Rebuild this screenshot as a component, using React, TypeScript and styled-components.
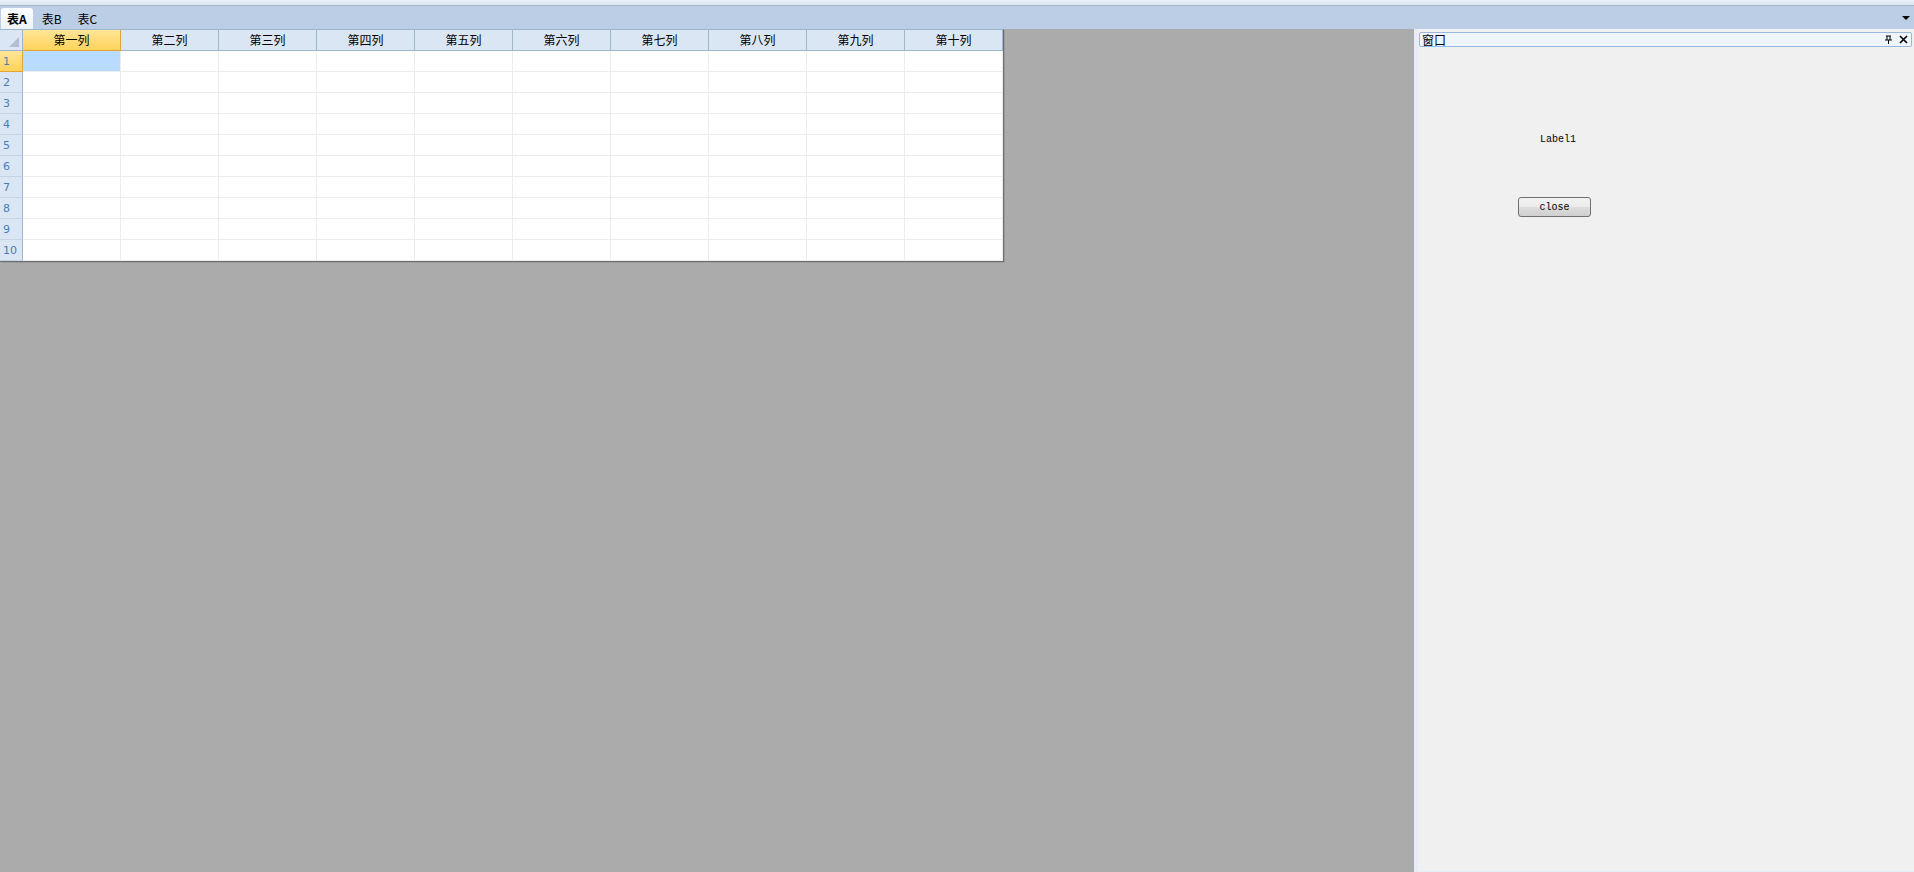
import React from 'react';
import styled, { createGlobalStyle } from 'styled-components';

const GlobalStyle = createGlobalStyle`
  *, *::before, *::after {
    box-sizing: border-box;
  }
  html, body {
    margin: 0;
    padding: 0;
    background: #ababab;
  }
  body {
    font-family: "Noto Sans CJK SC", "DejaVu Sans", sans-serif;
    font-size: 12px;
  }
`;

const columns = ['第一列', '第二列', '第三列', '第四列', '第五列', '第六列', '第七列', '第八列', '第九列', '第十列'];
const rows = [1, 2, 3, 4, 5, 6, 7, 8, 9, 10];

const Page = styled.div`
  display: flex;
  flex-direction: column;
  width: 1914px;
  height: 872px;
  overflow: hidden;
`;

const TopStrip = styled.div`
  height: 6px;
  background: linear-gradient(#e9f0f9, #d9e4f2);
  border-bottom: 1px solid #a7b6cb;
`;

const TabBar = styled.div`
  height: 23px;
  display: flex;
  align-items: flex-end;
  background: #bccee6;
  padding-left: 1px;
  position: relative;
`;

const Tab = styled.div<{ active?: boolean }>`
  height: ${(p) => (p.active ? 21 : 20)}px;
  display: flex;
  align-items: center;
  padding: 0 ${(p) => (p.active ? 6 : 8)}px;
  margin-right: ${(p) => (p.active ? 1 : 0)}px;
  font-weight: ${(p) => (p.active ? 700 : 400)};
  background: ${(p) => (p.active ? 'linear-gradient(#fbfdff, #eef4fb)' : 'transparent')};
  border-radius: 3px 3px 0 0;
  color: #000;
  font-size: 12px;
  line-height: 1;
`;

const DropArrow = styled.div`
  position: absolute;
  right: 4px;
  top: 10px;
  width: 0;
  height: 0;
  border-left: 4px solid transparent;
  border-right: 4px solid transparent;
  border-top: 4px solid #000;
`;

const Main = styled.div`
  flex: 1;
  display: flex;
  min-height: 0;
`;

const Workspace = styled.div`
  flex: 1;
  background: #ababab;
  align-self: stretch;
`;

const Sheet = styled.div`
  display: grid;
  grid-template-columns: 23px repeat(10, 98px);
  grid-auto-rows: 21px;
  width: fit-content;
  background: #fff;
  border-top: 1px solid #9eb6ce;
  border-right: 1px solid #6e6e6e;
  border-bottom: 1px solid #6e6e6e;
  box-shadow: 1px 1px 0 #9a9a9a;
`;

const Corner = styled.div`
  position: relative;
  background: #dae6f4;
  border-right: 1px solid #9eb6ce;
  border-bottom: 1px solid #9eb6ce;
  &::after {
    content: '';
    position: absolute;
    right: 3px;
    bottom: 3px;
    width: 0;
    height: 0;
    border-left: 10px solid transparent;
    border-bottom: 10px solid #b3bfcf;
  }
`;

const ColHead = styled.div<{ selected?: boolean }>`
  display: flex;
  align-items: center;
  justify-content: center;
  background: ${(p) => (p.selected ? 'linear-gradient(#ffe597, #ffd35b)' : '#dae6f4')};
  border-right: 1px solid ${(p) => (p.selected ? '#e3a53a' : '#9eb6ce')};
  border-bottom: 1px solid ${(p) => (p.selected ? '#e3a53a' : '#9eb6ce')};
  color: #000;
  font-size: 12px;
  line-height: 1;
`;

const RowHead = styled.div<{ selected?: boolean }>`
  display: flex;
  align-items: center;
  padding-left: 3px;
  background: ${(p) => (p.selected ? 'linear-gradient(#ffe597, #ffd35b)' : '#dae6f4')};
  border-right: 1px solid ${(p) => (p.selected ? '#e3a53a' : '#9eb6ce')};
  border-bottom: 1px solid ${(p) => (p.selected ? '#e3a53a' : '#c5d3e3')};
  color: #4a7db8;
  font-family: "DejaVu Sans", sans-serif;
  font-size: 11px;
  line-height: 1;
`;

const Cell = styled.div<{ selected?: boolean }>`
  background: ${(p) => (p.selected ? '#b9dbff' : '#fff')};
  border-right: 1px solid #ececec;
  border-bottom: 1px solid #ececec;
`;

const Panel = styled.div`
  width: 500px;
  display: flex;
  flex-direction: column;
  background: #f0f0f0;
  border-left: 4px solid #e6edf8;
  border-bottom: 1px solid #e6edf8;
  padding: 3px 2px 0 1px;
`;

const TitleBar = styled.div`
  height: 15px;
  display: flex;
  align-items: center;
  padding: 0 3px 0 2px;
  background: #eef5fd;
  border: 1px solid #98b8e3;
  border-radius: 2px;
  font-size: 12px;
  line-height: 1;
`;

const Title = styled.span`
  flex: 1;
`;

const TitleButton = styled.svg`
  width: 9px;
  height: 9px;
  margin-left: 6px;
`;

const FormBody = styled.div`
  flex: 1;
  display: flex;
  flex-direction: column;
  align-items: flex-start;
  padding-left: 99px;
`;

const Label = styled.div`
  margin: 87px 0 0 22px;
  font-family: "Liberation Mono", monospace;
  font-size: 10px;
  line-height: 12px;
  color: #000;
`;

const CloseButton = styled.button`
  margin-top: 51px;
  width: 73px;
  height: 20px;
  padding: 0;
  border: 1px solid #707070;
  border-radius: 3px;
  background: linear-gradient(#f2f2f2 0%, #ebebeb 48%, #dddddd 52%, #cfcfcf 100%);
  font-family: "Liberation Mono", monospace;
  font-size: 10px;
  color: #000;
`;

export default function App() {
  return (
    <>
      <GlobalStyle />
      <Page>
        <TopStrip />
        <TabBar>
          <Tab active>表A</Tab>
          <Tab>表B</Tab>
          <Tab>表C</Tab>
          <DropArrow />
        </TabBar>
        <Main>
          <Workspace>
            <Sheet>
              <Corner />
              {columns.map((c, i) => (
                <ColHead key={c} selected={i === 0}>
                  {c}
                </ColHead>
              ))}
              {rows.map((r) => (
                <React.Fragment key={r}>
                  <RowHead selected={r === 1}>{r}</RowHead>
                  {columns.map((c, i) => (
                    <Cell key={c} selected={r === 1 && i === 0} />
                  ))}
                </React.Fragment>
              ))}
            </Sheet>
          </Workspace>
          <Panel>
            <TitleBar>
              <Title>窗口</Title>
              <TitleButton viewBox="0 0 9 9">
                <path d="M2 1h5M3 1v4M6 1v4M1 5h7M4.5 5v4" stroke="#000" strokeWidth="1" fill="none" />
              </TitleButton>
              <TitleButton viewBox="0 0 9 9">
                <path d="M1 1l7 7M8 1l-7 7" stroke="#000" strokeWidth="1.6" fill="none" />
              </TitleButton>
            </TitleBar>
            <FormBody>
              <Label>Label1</Label>
              <CloseButton>close</CloseButton>
            </FormBody>
          </Panel>
        </Main>
      </Page>
    </>
  );
}
